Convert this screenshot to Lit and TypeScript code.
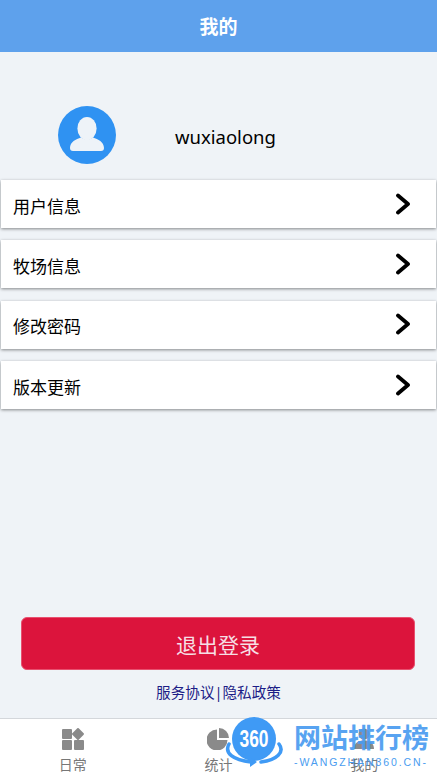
import { LitElement, css, html } from "lit";
import { customElement } from "lit/decorators.js";

const menu = ["用户信息", "牧场信息", "修改密码", "版本更新"];

@customElement("app-root")
export class AppRoot extends LitElement {
	private _chevron() {
		return html`<svg class="chevron" viewBox="0 0 16 22" fill="none">
			<path d="M3 2.500L13 11L3 19.500" stroke="#000" stroke-width="3.800" stroke-linecap="round" stroke-linejoin="round" />
		</svg>`;
	}

	render() {
		return html`
			<header class="header">我的</header>
			<main class="main">
				<section class="profile">
					<svg class="avatar" viewBox="0 0 58 58">
						<circle cx="29" cy="29" r="29" fill="#2f92f2" />
						<ellipse cx="29" cy="22.500" rx="9.600" ry="11.500" fill="#eef3f8" />
						<path d="M12 42c0-6 6-9 11-10.500c3 2.500 9 2.500 12 0c5 1.500 11 4.500 11 10.500c0 2-1 3-3 3H15c-2 0-3-1-3-3z" fill="#eef3f8" />
					</svg>
					<span class="name">wuxiaolong</span>
				</section>
				<div class="menu">
					${menu.map(
						(item) => html`<div class="row"><span>${item}</span>${this._chevron()}</div>`
					)}
				</div>
				<div class="spacer"></div>
				<button class="logout">退出登录</button>
				<div class="links">服务协议|隐私政策</div>
			</main>
			<nav class="tabs">
				<div class="tab">
					<svg class="tab-icon" viewBox="0 0 22 22" fill="#8a8a8a">
						<rect x="0" y="1" width="10" height="10" rx="1" />
						<rect x="11.500" y="1.500" width="9" height="9" rx="1" transform="rotate(45 16 6)" />
						<rect x="0" y="12" width="10" height="10" rx="1" />
						<rect x="12" y="12" width="10" height="10" rx="1" />
					</svg>
					<span>日常</span>
				</div>
				<div class="tab">
					<svg class="tab-icon" viewBox="0 0 22 22" fill="#8a8a8a">
						<path d="M10 1.500V12h10.500A10.500 10.500 0 1 1 10 1.500z" />
						<path d="M12 0a10 10 0 0 1 10 10H12z" />
					</svg>
					<span>统计</span>
				</div>
				<div class="tab">
					<svg class="tab-icon" viewBox="0 0 22 22" fill="#8a8a8a">
						<circle cx="11" cy="6" r="5.500" />
						<path d="M1 21c0-6 4-8.500 10-8.500s10 2.500 10 8.500z" />
					</svg>
					<span>我的</span>
				</div>
			</nav>
			<div class="watermark">
				<svg class="wm-logo" viewBox="0 0 60 58">
					<circle cx="29" cy="23" r="22" fill="#3f9af5" />
					<text x="29" y="31" text-anchor="middle" textLength="29" lengthAdjust="spacingAndGlyphs" class="wm-360">360</text>
					<path d="M4 28C-1 37 8 44 26 46" fill="none" stroke="#3f9af5" stroke-width="3.500" stroke-linecap="round" />
					<path d="M25 41l7 5l-7 5z" fill="#3f9af5" />
					<path d="M54 28C60 36 52 44 36 46" fill="none" stroke="#3f9af5" stroke-width="3.500" stroke-linecap="round" />
				</svg>
				<div class="wm-text">
					<div class="wm-title">网站排行榜</div>
					<div class="wm-sub">-WANGZHAN360.CN-</div>
				</div>
			</div>
		`;
	}

	static styles = css`
		:host {
			display: flex;
			flex-direction: column;
			position: relative;
			height: 776px;
			overflow: hidden;
			background: #eff3f7;
			font-family: "Noto Sans", "Noto Sans CJK SC", sans-serif;
			color: #000;
		}
		.header {
			flex: none;
			height: 52px;
			background: #5ea1ec;
			color: #fff;
			font-size: 19px;
			font-weight: 700;
			display: flex;
			align-items: center;
			justify-content: center;
		}
		.main {
			flex: 1;
			display: flex;
			flex-direction: column;
			min-height: 0;
		}
		.profile {
			flex: none;
			height: 128px;
			display: flex;
			align-items: center;
			padding: 38px 0 0 58px;
			box-sizing: border-box;
		}
		.avatar {
			width: 58px;
			height: 58px;
		}
		.name {
			margin: 2px 0 0 59px;
			font-size: 18.500px;
		}
		.menu {
			display: flex;
			flex-direction: column;
			gap: 12.400px;
			padding: 0 1px;
		}
		.row {
			height: 48px;
			background: #fff;
			box-shadow: 0 1px 3px rgba(0, 0, 0, 0.45);
			display: flex;
			align-items: center;
			justify-content: space-between;
			padding: 0 25px 0 12px;
			font-size: 17px;
		}
		.row span {
			padding-top: 2px;
		}
		.chevron {
			width: 16px;
			height: 22px;
			margin-top: -1px;
		}
		.spacer {
			flex: 1;
		}
		.logout {
			margin: 0 22px 0 21px;
			height: 53px;
			border: 1px solid #e8506f;
			border-radius: 6px;
			background: #dc143c;
			color: #f6dfe4;
			font-family: inherit;
			font-size: 21px;
		}
		.links {
			margin: 12px 0 16px;
			text-align: center;
			font-size: 14.600px;
			line-height: 20px;
			color: #1c1c86;
		}
		.tabs {
			flex: none;
			height: 57px;
			background: #fff;
			border-top: 1px solid #d4d7db;
			display: grid;
			grid-template-columns: repeat(3, 1fr);
		}
		.tab {
			display: flex;
			flex-direction: column;
			align-items: center;
			padding-top: 9px;
			gap: 6px;
			font-size: 14px;
			line-height: 17px;
			color: #777;
		}
		.tab-icon {
			width: 22px;
			height: 22px;
		}
		.watermark {
			position: absolute;
			left: 225px;
			top: 716px;
			display: flex;
			gap: 9px;
			color: #4a9cf0;
		}
		.wm-logo {
			width: 60px;
			height: 58px;
			flex: none;
		}
		.wm-360 {
			fill: #fff;
			font-family: "Liberation Sans", sans-serif;
			font-size: 23px;
			font-weight: 700;
		}
		.wm-text {
			padding-top: 6px;
		}
		.wm-title {
			font-size: 27px;
			font-weight: 700;
			line-height: 32px;
			white-space: nowrap;
			opacity: 0.92;
		}
		.wm-sub {
			font-family: "Liberation Sans", sans-serif;
			font-size: 10.500px;
			line-height: 14px;
			letter-spacing: 1.900px;
			margin-top: 1px;
			white-space: nowrap;
		}
	`;
}
